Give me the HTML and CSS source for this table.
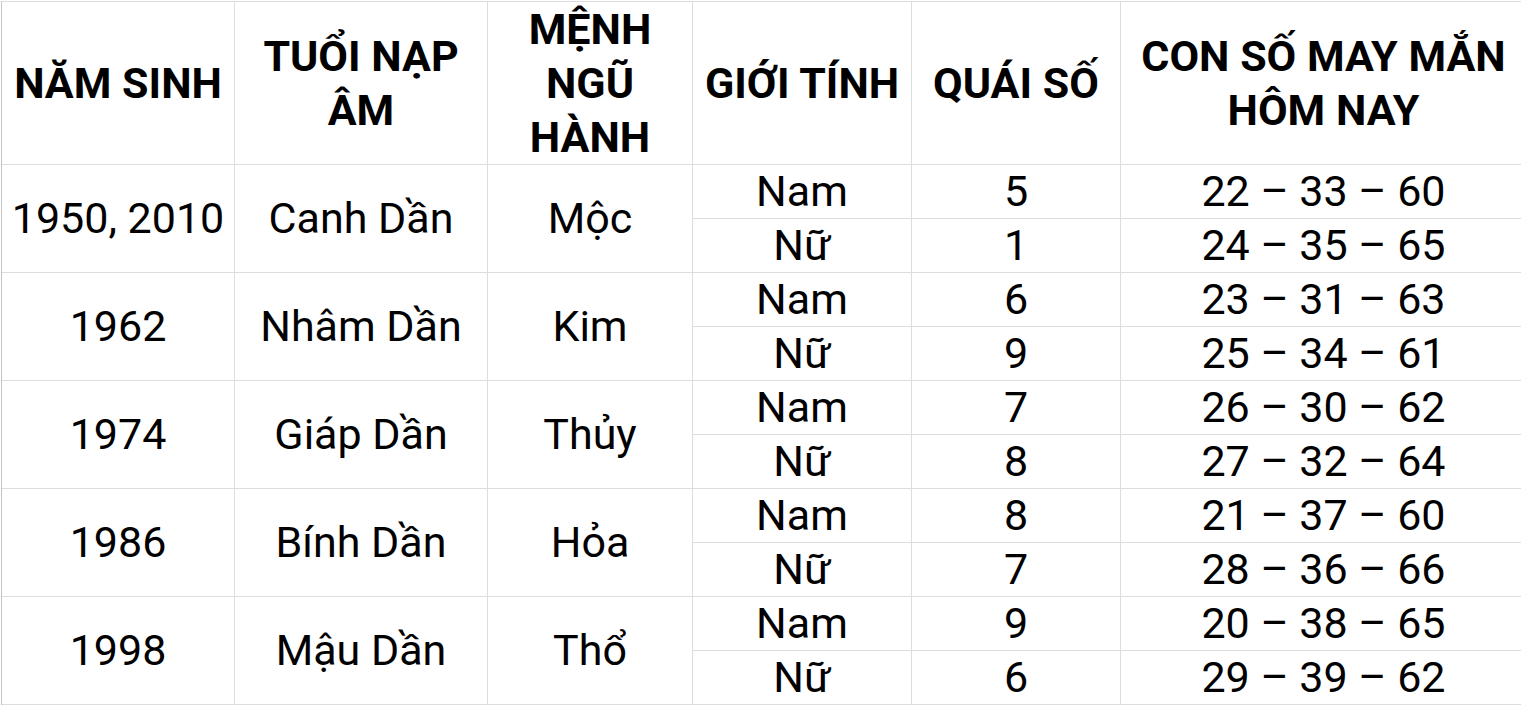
FILE: index.html
```html
<!DOCTYPE html>
<html lang="vi">
<head>
<meta charset="utf-8">
<title>Con số may mắn</title>
<link rel="stylesheet" href="styles.css">
</head>
<body>
<div class="sheet">
  <div class="cell head">NĂM SINH</div>
  <div class="cell head">TUỔI NẠP<br>ÂM</div>
  <div class="cell head">MỆNH<br>NGŨ<br>HÀNH</div>
  <div class="cell head">GIỚI TÍNH</div>
  <div class="cell head">QUÁI SỐ</div>
  <div class="cell head">CON SỐ MAY MẮN<br>HÔM NAY</div>

  <div class="cell span">1950, 2010</div>
  <div class="cell span">Canh Dần</div>
  <div class="cell span">Mộc</div>
  <div class="cell">Nam</div><div class="cell">5</div><div class="cell">22 – 33 – 60</div>
  <div class="cell">Nữ</div><div class="cell">1</div><div class="cell">24 – 35 – 65</div>

  <div class="cell span">1962</div>
  <div class="cell span">Nhâm Dần</div>
  <div class="cell span">Kim</div>
  <div class="cell">Nam</div><div class="cell">6</div><div class="cell">23 – 31 – 63</div>
  <div class="cell">Nữ</div><div class="cell">9</div><div class="cell">25 – 34 – 61</div>

  <div class="cell span">1974</div>
  <div class="cell span">Giáp Dần</div>
  <div class="cell span">Thủy</div>
  <div class="cell">Nam</div><div class="cell">7</div><div class="cell">26 – 30 – 62</div>
  <div class="cell">Nữ</div><div class="cell">8</div><div class="cell">27 – 32 – 64</div>

  <div class="cell span">1986</div>
  <div class="cell span">Bính Dần</div>
  <div class="cell span">Hỏa</div>
  <div class="cell">Nam</div><div class="cell">8</div><div class="cell">21 – 37 – 60</div>
  <div class="cell">Nữ</div><div class="cell">7</div><div class="cell">28 – 36 – 66</div>

  <div class="cell span">1998</div>
  <div class="cell span">Mậu Dần</div>
  <div class="cell span">Thổ</div>
  <div class="cell">Nam</div><div class="cell">9</div><div class="cell">20 – 38 – 65</div>
  <div class="cell">Nữ</div><div class="cell">6</div><div class="cell">29 – 39 – 62</div>
</div>
</body>
</html>
```

FILE: styles.css
```css
html, body {
  margin: 0;
  padding: 0;
  background: #ffffff;
}

body {
  font-family: Roboto, "Noto Sans", "Liberation Sans", sans-serif;
  color: #000000;
  overflow: hidden;
}

.sheet {
  display: grid;
  grid-template-columns: 232px 252px 204px 218px 208px 405px;
  grid-template-rows: 162px repeat(10, 53px);
  gap: 1px;
  background: #dddddd;
  margin: 1px 0 0 1px;
  padding: 1px 1px 1px 0;
  border-left: 1px solid #c4c4c4;
  width: max-content;
}

.cell {
  background: #ffffff;
  display: flex;
  align-items: center;
  justify-content: center;
  text-align: center;
  font-size: 43px;
  line-height: 53px;
  white-space: nowrap;
}

.head {
  font-weight: 700;
  line-height: 54px;
}

.span {
  grid-row: span 2;
}
```
